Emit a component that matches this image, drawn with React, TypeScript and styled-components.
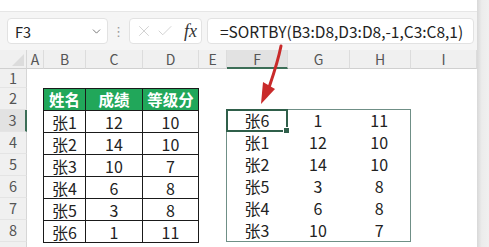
import styled, { createGlobalStyle } from 'styled-components';
import { ChevronDown, X, Check } from 'lucide-react';

const GlobalStyle = createGlobalStyle`
  html, body {
    margin: 0;
    padding: 0;
    background: #ffffff;
  }
  body {
    font-family: 'Noto Sans CJK SC', 'Liberation Sans', sans-serif;
    overflow: hidden;
  }
`;

const COLS = ['A', 'B', 'C', 'D', 'E', 'F', 'G', 'H', 'I'];
const COL_WIDTHS = [17, 42, 57, 56, 28, 61, 62, 61, 66];
const ROW_HEIGHTS = [19, 22, 22, 22, 22, 22, 22, 22, 22];

const source = [
  ['张1', '12', '10'],
  ['张2', '14', '10'],
  ['张3', '10', '7'],
  ['张4', '6', '8'],
  ['张5', '3', '8'],
  ['张6', '1', '11'],
];

const sorted = [
  ['张6', '1', '11'],
  ['张1', '12', '10'],
  ['张2', '14', '10'],
  ['张5', '3', '8'],
  ['张4', '6', '8'],
  ['张3', '10', '7'],
];

function App() {
  return (
    <>
      <GlobalStyle />
      <Window>
        <Main>
          <TopBand />
          <Toolbar>
            <NameBox>
              <span>F3</span>
              <ChevronDown size={13} strokeWidth={1.6} color="#666" />
            </NameBox>
            <Dots>⋮</Dots>
            <ActionBox>
              <X size={18} strokeWidth={1.1} color="#c9c9c9" />
              <Check size={18} strokeWidth={1.1} color="#c9c9c9" />
              <Fx>fx</Fx>
            </ActionBox>
            <FormulaBox>=SORTBY(B3:D8,D3:D8,-1,C3:C8,1)</FormulaBox>
          </Toolbar>
          <Sheet>
            <Corner>
              <CornerTri />
            </Corner>
            {COLS.map((c, i) => (
              <ColHead key={c} $active={c === 'F'} style={{ gridColumn: i + 2 }}>
                {c}
              </ColHead>
            ))}
            {ROW_HEIGHTS.map((_, r) => (
              <RowHead key={r} $active={r === 2} style={{ gridRow: r + 2 }}>
                {r < 8 ? r + 1 : ''}
              </RowHead>
            ))}

            <LeftTable>
              {['姓名', '成绩', '等级分'].map((h) => (
                <HeadCell key={h}>{h}</HeadCell>
              ))}
              {source.flat().map((v, i) => (
                <BodyCell key={i}>{v}</BodyCell>
              ))}
            </LeftTable>

            <RightTable>
              {sorted.flat().map((v, i) => (
                <SpillCell key={i} $selected={i === 0}>
                  {v}
                  {i === 0 && <Handle />}
                </SpillCell>
              ))}
            </RightTable>

            <Arrow viewBox="0 0 40 70" width="40" height="70">
              <path
                d="M31 2 C29 12 25 26 19.5 42"
                stroke="#c92a2a"
                strokeWidth="3"
                fill="none"
                strokeLinecap="round"
              />
              <path d="M11 60 L13 38 L25 45 Z" fill="#c92a2a" />
            </Arrow>
          </Sheet>
        </Main>
        <SideStrip />
      </Window>
    </>
  );
}
export default App;

const Window = styled.div`
  display: flex;
  width: 489px;
  height: 247px;
  overflow: hidden;
`;

const Main = styled.div`
  width: 477px;
  flex-shrink: 0;
  display: flex;
  flex-direction: column;
  background: #fff;
`;

const SideStrip = styled.div`
  flex: 1;
  background: linear-gradient(90deg, #d8d8d8, #ececec 40%, #f0f0f0);
`;

const TopBand = styled.div`
  flex-shrink: 0;
  height: 11px;
  background: #fff;
  border-bottom: 1px solid #e6e6e6;
`;

const Toolbar = styled.div`
  flex-shrink: 0;
  height: 38px;
  background: #f5f5f5;
  display: flex;
  align-items: center;
  padding: 0 3px 0 7px;
  box-sizing: border-box;
`;

const NameBox = styled.div`
  width: 101px;
  height: 26px;
  box-sizing: border-box;
  background: #fff;
  border: 1px solid #e2e2e2;
  border-radius: 4px;
  display: flex;
  align-items: center;
  justify-content: space-between;
  padding: 0 4px 0 7px;
  font-family: 'Noto Sans CJK SC', 'Liberation Sans', sans-serif;
  font-size: 14.5px;
  color: #222;
`;

const Dots = styled.div`
  width: 21px;
  text-align: center;
  color: #999;
  font-size: 13px;
  font-family: 'DejaVu Sans', sans-serif;
`;

const ActionBox = styled.div`
  width: 73px;
  height: 26px;
  box-sizing: border-box;
  background: #fff;
  border: 1px solid #e2e2e2;
  border-radius: 4px;
  display: flex;
  align-items: center;
  gap: 3px;
  padding: 0 4px 0 5px;
`;

const Fx = styled.span`
  margin-left: auto;
  font-family: 'Liberation Serif', serif;
  font-style: italic;
  font-size: 18px;
  color: #333;
`;

const FormulaBox = styled.div`
  margin-left: 5px;
  flex: 1;
  height: 26px;
  box-sizing: border-box;
  background: #fff;
  border: 1px solid #e2e2e2;
  border-radius: 4px;
  display: flex;
  align-items: center;
  padding-left: 12px;
  font-family: 'Noto Sans CJK SC', 'Liberation Sans', sans-serif;
  font-size: 15.5px;
  color: #222;
  white-space: nowrap;
`;

const Sheet = styled.div`
  position: relative;
  flex-shrink: 0;
  display: grid;
  grid-template-columns: 27px ${COL_WIDTHS.map((w) => `${w}px`).join(' ')};
  grid-template-rows: 19px ${ROW_HEIGHTS.map((h) => `${h}px`).join(' ')};
  font-family: 'Noto Sans CJK SC', 'Liberation Sans', sans-serif;
  line-height: 1;
`;

const Corner = styled.div`
  grid-column: 1;
  grid-row: 1;
  background: #f0f0f0;
  border-right: 1px solid #d6d6d6;
  border-bottom: 1px solid #d0d0d0;
  position: relative;
`;

const CornerTri = styled.div`
  position: absolute;
  right: 2px;
  bottom: 2px;
  width: 0;
  height: 0;
  border-left: 12px solid transparent;
  border-bottom: 12px solid #dcdcdc;
`;

const ColHead = styled.div<{ $active?: boolean }>`
  grid-row: 1;
  display: flex;
  align-items: center;
  justify-content: center;
  background: ${(p) => (p.$active ? '#e2e2e2' : '#f0f0f0')};
  border-right: 1px solid #dcdcdc;
  border-bottom: ${(p) => (p.$active ? '2px solid #3c6e57' : '1px solid #d0d0d0')};
  box-sizing: border-box;
  font-size: 14px;
  color: #555;
`;

const RowHead = styled.div<{ $active?: boolean }>`
  grid-column: 1;
  display: flex;
  align-items: center;
  justify-content: center;
  background: ${(p) => (p.$active ? '#e2e2e2' : '#f0f0f0')};
  border-right: ${(p) => (p.$active ? '2px solid #3c6e57' : '1px solid #d6d6d6')};
  border-bottom: 1px solid #e4e4e4;
  box-sizing: border-box;
  font-size: 14.5px;
  color: #555;
`;

const LeftTable = styled.div`
  grid-column: 3 / 6;
  grid-row: 3 / 10;
  display: grid;
  grid-template-columns: 41fr 56fr 55fr;
  grid-template-rows: repeat(7, minmax(0, 1fr));
  gap: 1px;
  background: #1a1a1a;
  border: 1px solid #1a1a1a;
  margin: 0 0 -1px -1px;
`;

const HeadCell = styled.div`
  background: #21a75a;
  color: #fff;
  font-weight: bold;
  font-size: 15.5px;
  display: flex;
  align-items: center;
  justify-content: center;
`;

const BodyCell = styled.div`
  background: #fff;
  color: #222;
  font-size: 16px;
  display: flex;
  align-items: center;
  justify-content: center;
`;

const RightTable = styled.div`
  grid-column: 7 / 10;
  grid-row: 4 / 10;
  display: grid;
  grid-template-columns: 61fr 62fr 61fr;
  grid-template-rows: repeat(6, minmax(0, 1fr));
  border: 1px solid #6f8f86;
  margin: -1px 0 0 -1px;
`;

const SpillCell = styled.div<{ $selected?: boolean }>`
  position: relative;
  display: flex;
  align-items: center;
  justify-content: center;
  font-size: 16px;
  color: #222;
  box-sizing: border-box;
  border: ${(p) => (p.$selected ? '2px solid #2f5f4a' : '2px solid transparent')};
  margin: -1px 0 0 -1px;
`;

const Handle = styled.div`
  position: absolute;
  right: -4px;
  bottom: -4px;
  width: 5px;
  height: 5px;
  background: #2f5f4a;
  border: 1px solid #fff;
`;

const Arrow = styled.svg`
  position: absolute;
  left: 250px;
  top: -6px;
`;
